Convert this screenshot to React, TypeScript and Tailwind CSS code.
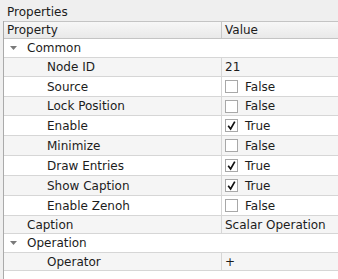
import React from "react";

type Row =
  | { kind: "group"; label: string; h: number; alt: boolean }
  | { kind: "text"; label: string; value: string; level: number; h: number; alt: boolean }
  | { kind: "check"; label: string; checked: boolean; level: number; h: number; alt: boolean };

const rows: Row[] = [
  { kind: "group", label: "Common", h: 19, alt: false },
  { kind: "text", label: "Node ID", value: "21", level: 2, h: 19, alt: true },
  { kind: "check", label: "Source", checked: false, level: 2, h: 20, alt: false },
  { kind: "check", label: "Lock Position", checked: false, level: 2, h: 19, alt: true },
  { kind: "check", label: "Enable", checked: true, level: 2, h: 20, alt: false },
  { kind: "check", label: "Minimize", checked: false, level: 2, h: 20, alt: true },
  { kind: "check", label: "Draw Entries", checked: true, level: 2, h: 20, alt: false },
  { kind: "check", label: "Show Caption", checked: true, level: 2, h: 20, alt: true },
  { kind: "check", label: "Enable Zenoh", checked: false, level: 2, h: 20, alt: false },
  { kind: "text", label: "Caption", value: "Scalar Operation", level: 1, h: 18, alt: true },
  { kind: "group", label: "Operation", h: 19, alt: false },
  { kind: "text", label: "Operator", value: "+", level: 2, h: 18, alt: true },
];

function Arrow() {
  return (
    <svg width="7" height="4" viewBox="0 0 7 4" className="absolute left-[6px] top-1/2 -translate-y-1/2">
      <polygon points="0,0 7,0 3.5,4" fill="#7a7a7a" />
    </svg>
  );
}

function Check({ checked }: { checked: boolean }) {
  return (
    <div className="w-[13px] h-[13px] border border-[#a8a8a8] bg-white flex items-center justify-center shrink-0">
      {checked && (
        <svg width="11" height="11" viewBox="0 0 11 11">
          <path d="M2.2 5.8 L4.6 9 L8.8 1.6" fill="none" stroke="#111" strokeWidth="1.7" strokeLinejoin="miter" />
        </svg>
      )}
    </div>
  );
}

export default function App() {
  return (
    <div className="w-[338px] h-[279px] bg-[#efefef] font-['DejaVu_Sans',sans-serif] text-[12px] leading-[14px] text-[#1c1c1c] overflow-hidden flex flex-col">
      <div className="h-[21px] pl-[7px] pt-[5px] shrink-0">Properties</div>
      <div className="flex-1 ml-[3px] border-l border-[#aaaaaa] bg-white flex flex-col">
        <div className="flex h-[18px] shrink-0 border-t border-b border-[#c4c4c4] bg-gradient-to-b from-[#f7f7f7] to-[#e9e9e9]">
          <div className="w-[218px] border-r border-[#c8c8c8] pl-[3px] flex items-center">Property</div>
          <div className="flex-1 pl-[3px] flex items-center">Value</div>
        </div>
        {rows.map((r, i) => (
          <div
            key={i}
            style={{ height: r.h }}
            className={`flex shrink-0 border-b border-[#d6d6d6] ${r.alt ? "bg-[#f5f5f5]" : "bg-white"}`}
          >
            {r.kind === "group" ? (
              <div className="relative flex-1 pl-[23px] flex items-center">
                <Arrow />
                {r.label}
              </div>
            ) : (
              <>
                <div
                  className={`w-[218px] border-r border-[#d6d6d6] flex items-center ${
                    r.level === 2 ? "pl-[43px]" : "pl-[23px]"
                  }`}
                >
                  {r.label}
                </div>
                <div className="flex-1 pl-[3px] flex items-center">
                  {r.kind === "text" ? (
                    r.value
                  ) : (
                    <>
                      <Check checked={r.checked} />
                      <span className="ml-[7px]">{r.checked ? "True" : "False"}</span>
                    </>
                  )}
                </div>
              </>
            )}
          </div>
        ))}
      </div>
    </div>
  );
}
